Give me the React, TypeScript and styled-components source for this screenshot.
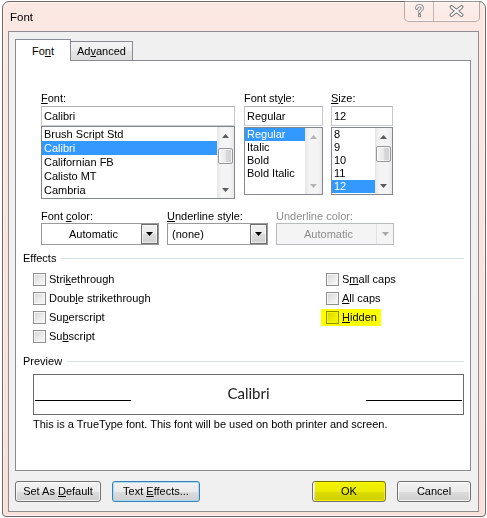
import React from "react";
import styled, { createGlobalStyle, css } from "styled-components";

const GlobalStyle = createGlobalStyle`
  html, body {
    margin: 0;
    padding: 0;
    background: #ffffff;
  }
  body {
    font-family: "Liberation Sans", Arial, sans-serif;
    font-size: 11px;
    color: #000000;
  }
  u {
    text-underline-offset: 1px;
  }
`;

const Window = styled.div`
  box-sizing: border-box;
  width: 484px;
  height: 516px;
  margin: 1px 0 0 2px;
  padding: 0 6px 4px 5px;
  display: flex;
  flex-direction: column;
  border: 1px solid #6c6666;
  border-radius: 7px 7px 4px 4px;
  background: linear-gradient(#fce8e3, #fbe3dd 60%, #f9e0da);
  box-shadow: inset 0 0 0 1px rgba(255, 255, 255, 0.55);
`;

const TitleBar = styled.div`
  height: 29px;
  display: flex;
  align-items: flex-start;
`;

const Title = styled.div`
  margin: 8px 0 0 2px;
  font-size: 11.5px;
  line-height: 15px;
`;

const CaptionGroup = styled.div`
  margin: -1px -1px 0 auto;
  display: flex;
`;

const CaptionButton = styled.div<{ $w: number; $side: "left" | "right" }>`
  box-sizing: border-box;
  width: ${(p) => p.$w}px;
  height: 21px;
  display: flex;
  align-items: center;
  justify-content: center;
  border: 1px solid rgba(120, 100, 100, 0.5);
  border-top: none;
  background: linear-gradient(rgba(255, 255, 255, 0.3), rgba(255, 255, 255, 0.08));
  box-shadow: inset 0 -1px 0 rgba(255, 255, 255, 0.6);
  ${(p) =>
    p.$side === "left"
      ? css`
          border-radius: 0 0 0 5px;
          border-right: none;
        `
      : css`
          border-radius: 0 0 5px 0;
          border-left: 1px solid rgba(120, 100, 100, 0.4);
        `}
`;

const Client = styled.div`
  flex: 1;
  box-sizing: border-box;
  display: flex;
  flex-direction: column;
  padding: 7px 7px 9px 6px;
  border: 1px solid #8e8e8e;
  background: #f0f0f0;
`;

const TabStrip = styled.div`
  height: 21px;
  display: flex;
  align-items: flex-end;
`;

const Tab = styled.div<{ $active?: boolean }>`
  box-sizing: border-box;
  position: relative;
  text-align: center;
  border: 1px solid #898c95;
  border-bottom: none;
  ${(p) =>
    p.$active
      ? css`
          z-index: 1;
          width: 56px;
          height: 22px;
          margin-bottom: -1px;
          padding-top: 2px;
          line-height: 18px;
          background: #ffffff;
        `
      : css`
          width: 63px;
          height: 19px;
          margin-left: -1px;
          padding-top: 1px;
          line-height: 17px;
          background: linear-gradient(#f4f4f4, #ececec 50%, #e4e4e4 51%, #dedede);
        `}
`;

const Panel = styled.div`
  box-sizing: border-box;
  height: 411px;
  padding-top: 29px;
  border: 1px solid #898c95;
  background: #ffffff;
  display: flex;
  flex-direction: column;
`;

const PickerRow = styled.div`
  display: flex;
  margin-left: 25px;
`;

const Column = styled.div<{ $w: number; $ml?: number }>`
  width: ${(p) => p.$w}px;
  margin-left: ${(p) => p.$ml ?? 0}px;
  display: flex;
  flex-direction: column;
`;

const Label = styled.div<{ $h?: number; $disabled?: boolean }>`
  line-height: ${(p) => p.$h ?? 16}px;
  height: ${(p) => p.$h ?? 16}px;
  white-space: nowrap;
  color: ${(p) => (p.$disabled ? "#8d8d8d" : "#000000")};
`;

const TextBox = styled.div`
  box-sizing: border-box;
  height: 20px;
  padding: 0 2px;
  line-height: 18px;
  border: 1px solid #abadb3;
  border-left-color: #c4c7cc;
  border-right-color: #c4c7cc;
  border-bottom-color: #c9ccd1;
  background: #ffffff;
`;

const ListBox = styled.div<{ $h: number; $top?: number }>`
  box-sizing: border-box;
  height: ${(p) => p.$h}px;
  margin-top: ${(p) => p.$top ?? 0}px;
  border: 1px solid #828790;
  display: flex;
  background: #ffffff;
`;

const Items = styled.div`
  flex: 1;
  overflow: hidden;
`;

const Item = styled.div<{ $h: number; $selected?: boolean }>`
  height: ${(p) => p.$h}px;
  line-height: ${(p) => p.$h}px;
  padding-left: 2px;
  white-space: nowrap;
  ${(p) =>
    p.$selected &&
    css`
      background: #3399ff;
      color: #ffffff;
    `}
`;

const ScrollBar = styled.div`
  width: 17px;
  display: flex;
  flex-direction: column;
  background: linear-gradient(to right, #e6e6e6, #f4f4f4 25%, #f4f4f4 75%, #e9e9e9);
`;

const ScrollButton = styled.div`
  height: 17px;
  display: flex;
  align-items: center;
  justify-content: center;
`;

const Track = styled.div<{ $offset: number }>`
  flex: 1;
  display: flex;
  justify-content: center;
  align-items: flex-start;
  padding-top: ${(p) => p.$offset}px;
`;

const Thumb = styled.div<{ $h: number }>`
  box-sizing: border-box;
  width: 15px;
  height: ${(p) => p.$h}px;
  border: 1px solid #979797;
  border-radius: 2px;
  background: linear-gradient(to right, #f5f5f5, #e9e9e9 50%, #d9d9d9 51%, #d0d0d0);
  box-shadow: inset 0 0 0 1px rgba(255, 255, 255, 0.7);
`;

const ColorRow = styled.div`
  display: flex;
  gap: 8px;
  margin: 10px 0 0 25px;
`;

const Combo = styled.div<{ $disabled?: boolean }>`
  box-sizing: border-box;
  height: 22px;
  display: flex;
  border: 1px solid ${(p) => (p.$disabled ? "#b9bcbf" : "#9a9a9a")};
  background: ${(p) => (p.$disabled ? "#f4f4f4" : "#ffffff")};
`;

const ComboValue = styled.div<{ $center?: boolean; $disabled?: boolean }>`
  flex: 1;
  line-height: 20px;
  padding-left: 4px;
  text-align: ${(p) => (p.$center ? "center" : "left")};
  color: ${(p) => (p.$disabled ? "#8d8d8d" : "#000000")};
`;

const DropButton = styled.div<{ $disabled?: boolean }>`
  box-sizing: border-box;
  width: 17px;
  display: flex;
  align-items: center;
  justify-content: center;
  ${(p) =>
    p.$disabled
      ? css`
          border-left: 1px solid #e2e2e2;
        `
      : css`
          border: 1px solid #707070;
          background: linear-gradient(#f2f2f2, #ebebeb 50%, #dddddd 51%, #cfcfcf);
          box-shadow: inset 0 0 0 1px rgba(255, 255, 255, 0.6);
        `}
`;

const GroupHeader = styled.div<{ $top: number }>`
  display: flex;
  align-items: center;
  gap: 5px;
  height: 15px;
  line-height: 15px;
  margin: ${(p) => p.$top}px 6px 0 7px;
`;

const HeaderLine = styled.div`
  flex: 1;
  height: 1px;
  background: #d5dfe5;
`;

const Effects = styled.div`
  display: flex;
  margin: 4px 0 0 17px;
`;

const CheckColumn = styled.div<{ $w?: number }>`
  width: ${(p) => (p.$w ? `${p.$w}px` : "auto")};
  display: flex;
  flex-direction: column;
  align-items: flex-start;
`;

const CheckRow = styled.div`
  position: relative;
  height: 19px;
  display: flex;
  align-items: center;
  gap: 3px;
  line-height: 19px;
  white-space: nowrap;
`;

const CheckBox = styled.div`
  box-sizing: border-box;
  width: 13px;
  height: 13px;
  border: 1px solid #8e8f8f;
  background: linear-gradient(135deg, #d2d4d6, #eeeeee 60%, #f7f7f7);
  box-shadow: inset 0 0 0 1px #f6f6f6;
`;

const Marker = styled.span<{ $inset: string }>`
  position: absolute;
  inset: ${(p) => p.$inset};
  background: #ffff00;
  mix-blend-mode: multiply;
  pointer-events: none;
`;

const PreviewBox = styled.div`
  box-sizing: border-box;
  height: 41px;
  margin: 5px 6px 0 17px;
  padding: 0 1px;
  border: 1px solid #6b6b6b;
  display: flex;
  align-items: flex-start;
`;

const BaseLine = styled.div`
  width: 96px;
  height: 1px;
  margin-top: 25px;
  background: #000000;
`;

const Sample = styled.div`
  flex: 1;
  margin-top: 9px;
  text-align: center;
  font-family: Lato, "Open Sans", sans-serif;
  font-size: 15px;
  line-height: 18px;
  color: #1a1a1a;
`;

const Description = styled.div`
  margin: 2px 0 0 17px;
  line-height: 15px;
`;

const ButtonRow = styled.div`
  display: flex;
  gap: 11px;
  margin-top: 10px;
`;

const Button = styled.div<{ $w: number; $focused?: boolean; $push?: boolean }>`
  box-sizing: border-box;
  position: relative;
  width: ${(p) => p.$w}px;
  height: 21px;
  line-height: 19px;
  text-align: center;
  border-radius: 3px;
  border: 1px solid ${(p) => (p.$focused ? "#3c7fb1" : "#707070")};
  background: linear-gradient(#f2f2f2, #ebebeb 50%, #dddddd 51%, #cfcfcf);
  box-shadow: inset 0 0 0 1px
    ${(p) => (p.$focused ? "#a7dcf6" : "rgba(255, 255, 255, 0.75)")};
  margin-left: ${(p) => (p.$push ? "auto" : "0")};
`;

const Arrow = ({ dir, color }: { dir: "up" | "down"; color: string }) => (
  <svg width="7" height="4" viewBox="0 0 7 4">
    <polygon points={dir === "up" ? "0,4 7,4 3.5,0" : "0,0 7,0 3.5,4"} fill={color} />
  </svg>
);

const HelpGlyph = () => (
  <svg width="11" height="14" viewBox="0 0 12 15">
    <g fill="none" strokeLinecap="round">
      <path d="M3 4.6C3 2.7 4.4 1.8 6 1.8c1.8 0 3 1 3 2.6 0 2-2.9 2.3-2.9 4.6" stroke="#777777" strokeWidth="3.4" />
      <path d="M6.1 12.3v0.3" stroke="#777777" strokeWidth="3.4" />
      <path d="M3 4.6C3 2.7 4.4 1.8 6 1.8c1.8 0 3 1 3 2.6 0 2-2.9 2.3-2.9 4.6" stroke="#ffffff" strokeWidth="1.5" />
      <path d="M6.1 12.3v0.3" stroke="#ffffff" strokeWidth="1.5" />
    </g>
  </svg>
);

const CloseGlyph = () => (
  <svg width="15" height="12" viewBox="0 0 15 12">
    <g fill="none" strokeLinecap="round">
      <path d="M2.5 2l10 8M12.5 2l-10 8" stroke="#777777" strokeWidth="3.8" />
      <path d="M2.5 2l10 8M12.5 2l-10 8" stroke="#ffffff" strokeWidth="1.8" />
    </g>
  </svg>
);

type ScrollProps = { thumbOffset?: number; thumbHeight?: number; disabled?: boolean };

const VScroll = ({ thumbOffset = 0, thumbHeight = 0, disabled }: ScrollProps) => {
  const c = disabled ? "#b4b4b4" : "#5a5a5a";
  return (
    <ScrollBar>
      <ScrollButton>
        <Arrow dir="up" color={c} />
      </ScrollButton>
      <Track $offset={thumbOffset}>{!disabled && <Thumb $h={thumbHeight} />}</Track>
      <ScrollButton>
        <Arrow dir="down" color={c} />
      </ScrollButton>
    </ScrollBar>
  );
};

const fonts = ["Brush Script Std", "Calibri", "Californian FB", "Calisto MT", "Cambria"];
const styles = ["Regular", "Italic", "Bold", "Bold Italic"];
const sizes = ["8", "9", "10", "11", "12"];

export default function App() {
  return (
    <>
      <GlobalStyle />
      <Window>
        <TitleBar>
          <Title>Font</Title>
          <CaptionGroup>
            <CaptionButton $w={29} $side="left">
              <HelpGlyph />
            </CaptionButton>
            <CaptionButton $w={47} $side="right">
              <CloseGlyph />
            </CaptionButton>
          </CaptionGroup>
        </TitleBar>

        <Client>
          <TabStrip>
            <Tab $active>
              Fo<u>n</u>t
            </Tab>
            <Tab>
              Ad<u>v</u>anced
            </Tab>
          </TabStrip>

          <Panel>
            <PickerRow>
              <Column $w={194}>
                <Label>
                  <u>F</u>ont:
                </Label>
                <TextBox>Calibri</TextBox>
                <ListBox $h={73}>
                  <Items>
                    {fonts.map((f) => (
                      <Item key={f} $h={14} $selected={f === "Calibri"}>
                        {f}
                      </Item>
                    ))}
                  </Items>
                  <VScroll thumbOffset={4} thumbHeight={16} />
                </ListBox>
              </Column>
              <Column $w={79} $ml={9}>
                <Label>
                  Font st<u>y</u>le:
                </Label>
                <TextBox>Regular</TextBox>
                <ListBox $h={68} $top={1}>
                  <Items>
                    {styles.map((s) => (
                      <Item key={s} $h={13} $selected={s === "Regular"}>
                        {s}
                      </Item>
                    ))}
                  </Items>
                  <VScroll disabled />
                </ListBox>
              </Column>
              <Column $w={62} $ml={8}>
                <Label>
                  <u>S</u>ize:
                </Label>
                <TextBox>12</TextBox>
                <ListBox $h={68} $top={1}>
                  <Items>
                    {sizes.map((s) => (
                      <Item key={s} $h={13} $selected={s === "12"}>
                        {s}
                      </Item>
                    ))}
                  </Items>
                  <VScroll thumbOffset={1} thumbHeight={16} />
                </ListBox>
              </Column>
            </PickerRow>

            <ColorRow>
              <Column $w={118}>
                <Label $h={14}>
                  Font <u>c</u>olor:
                </Label>
                <Combo>
                  <ComboValue $center>Automatic</ComboValue>
                  <DropButton>
                    <Arrow dir="down" color="#000000" />
                  </DropButton>
                </Combo>
              </Column>
              <Column $w={101}>
                <Label $h={14}>
                  <u>U</u>nderline style:
                </Label>
                <Combo>
                  <ComboValue>(none)</ComboValue>
                  <DropButton>
                    <Arrow dir="down" color="#000000" />
                  </DropButton>
                </Combo>
              </Column>
              <Column $w={118}>
                <Label $h={14} $disabled>
                  Underline color:
                </Label>
                <Combo $disabled>
                  <ComboValue $center $disabled>
                    Automatic
                  </ComboValue>
                  <DropButton $disabled>
                    <Arrow dir="down" color="#a8a8a8" />
                  </DropButton>
                </Combo>
              </Column>
            </ColorRow>

            <GroupHeader $top={6}>
              Effects
              <HeaderLine />
            </GroupHeader>
            <Effects>
              <CheckColumn $w={293}>
                <CheckRow>
                  <CheckBox />
                  <span>
                    Stri<u>k</u>ethrough
                  </span>
                </CheckRow>
                <CheckRow>
                  <CheckBox />
                  <span>
                    Doub<u>l</u>e strikethrough
                  </span>
                </CheckRow>
                <CheckRow>
                  <CheckBox />
                  <span>
                    Su<u>p</u>erscript
                  </span>
                </CheckRow>
                <CheckRow>
                  <CheckBox />
                  <span>
                    Su<u>b</u>script
                  </span>
                </CheckRow>
              </CheckColumn>
              <CheckColumn>
                <CheckRow>
                  <CheckBox />
                  <span>
                    S<u>m</u>all caps
                  </span>
                </CheckRow>
                <CheckRow>
                  <CheckBox />
                  <span>
                    <u>A</u>ll caps
                  </span>
                </CheckRow>
                <CheckRow>
                  <CheckBox />
                  <span>
                    <u>H</u>idden
                  </span>
                  <Marker $inset="1px -4px 1px -5px" />
                </CheckRow>
              </CheckColumn>
            </Effects>

            <GroupHeader $top={8}>
              Preview
              <HeaderLine />
            </GroupHeader>
            <PreviewBox>
              <BaseLine />
              <Sample>Calibri</Sample>
              <BaseLine />
            </PreviewBox>
            <Description>
              This is a TrueType font. This font will be used on both printer and screen.
            </Description>
          </Panel>

          <ButtonRow>
            <Button $w={86}>
              Set As <u>D</u>efault
            </Button>
            <Button $w={88} $focused>
              Text <u>E</u>ffects...
            </Button>
            <Button $w={74} $push>
              OK
              <Marker $inset="-1px 0 0 2px" />
            </Button>
            <Button $w={74}>Cancel</Button>
          </ButtonRow>
        </Client>
      </Window>
    </>
  );
}
